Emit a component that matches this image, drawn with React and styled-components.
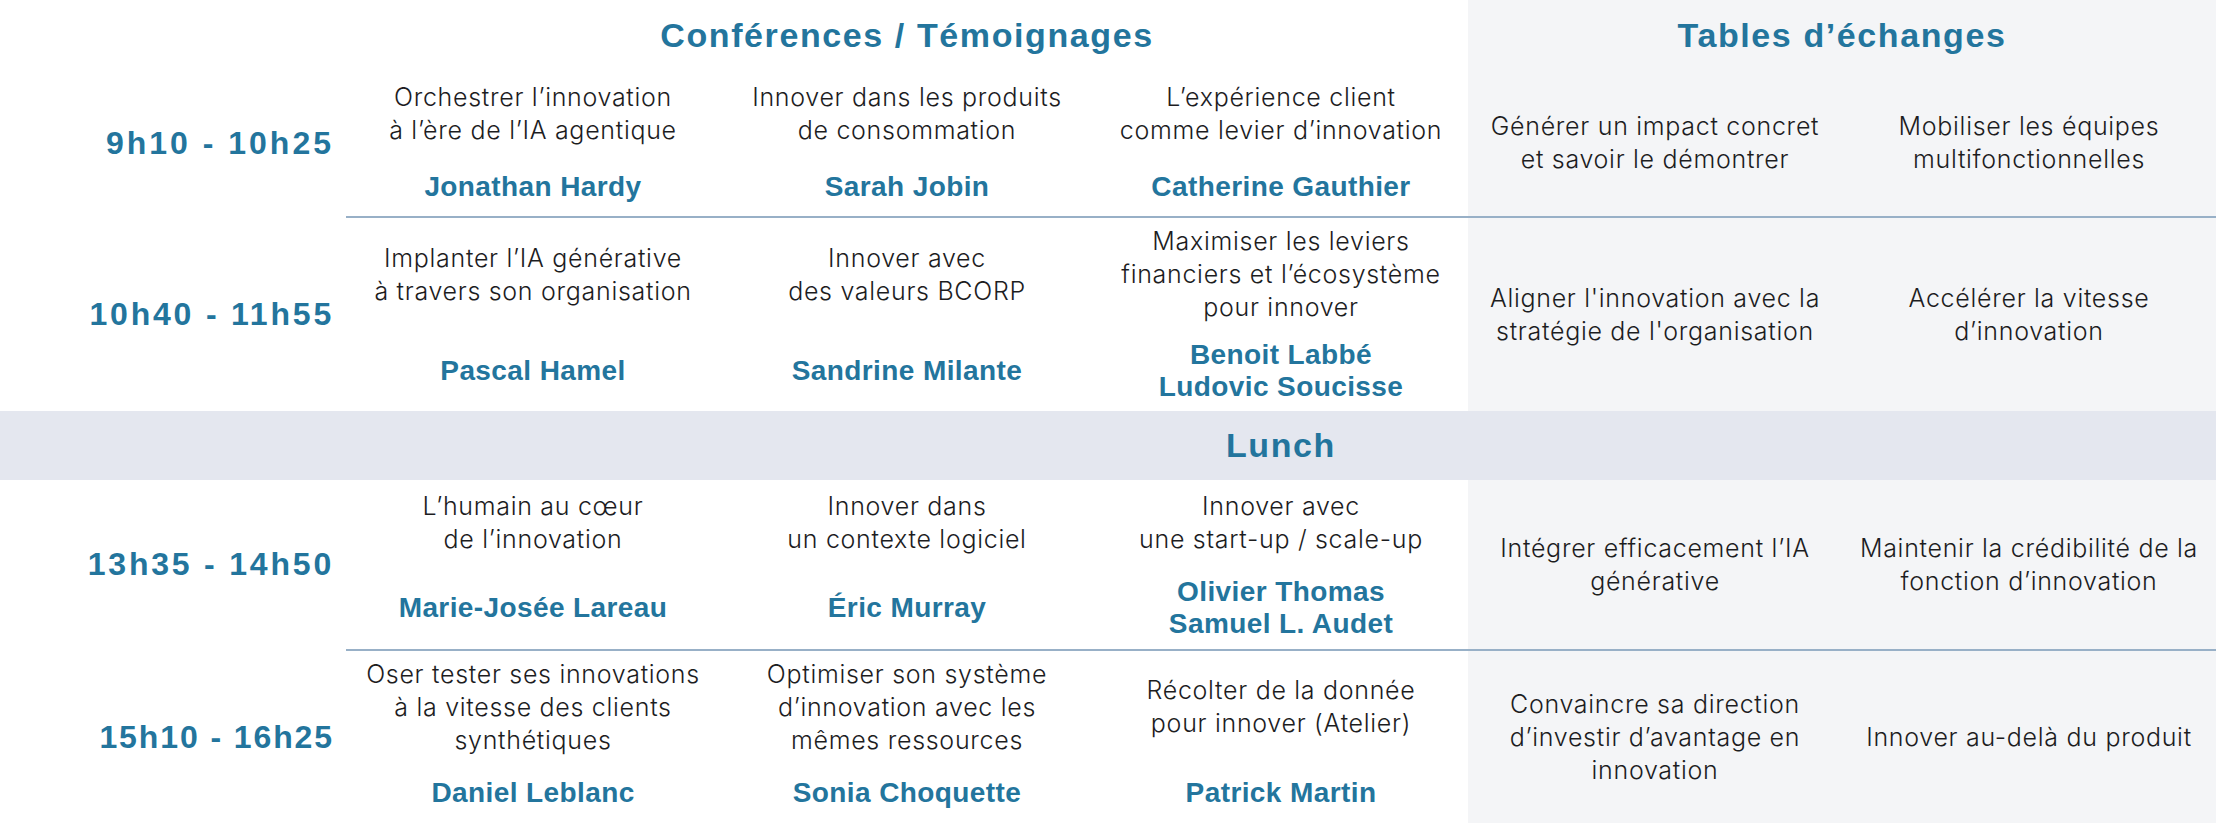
import React from "react";
import styled, { createGlobalStyle } from "styled-components";

const BLUE = "#23759d";
const PANEL = "#f4f5f7";
const BAND = "#e4e7ef";
const RULE = "#98b0c7";
const COLS = "346px repeat(5, 374px)";

const GlobalStyle = createGlobalStyle`
  html, body { margin: 0; padding: 0; background: #ffffff; }
  body { font-family: "Liberation Sans", Arial, sans-serif; }
`;

const Schedule = styled.div`
  width: 2216px;
  display: flex;
  flex-direction: column;
`;

const HeaderRow = styled.div`
  display: grid;
  grid-template-columns: ${COLS};
  height: 70px;
`;

const SectionTitle = styled.h2`
  margin: 0;
  grid-column: ${(p) => p.$cols};
  display: flex;
  align-items: center;
  justify-content: center;
  background: ${(p) => (p.$tinted ? PANEL : "transparent")};
  color: ${BLUE};
  font-family: "Liberation Sans", Arial, sans-serif;
  font-weight: 700;
  font-size: 34px;
  letter-spacing: 1.6px;
`;

const Slot = styled.div`
  display: grid;
  grid-template-columns: ${COLS};
  grid-template-rows: ${(p) => `${p.$titleH}px ${p.$nameH}px`};
`;

const TimeCell = styled.div`
  grid-column: 1;
  grid-row: 1 / 3;
  display: flex;
  align-items: center;
  justify-content: flex-end;
  padding-right: 12px;
  color: ${BLUE};
  font-family: "Liberation Sans", Arial, sans-serif;
  font-weight: 700;
  font-size: 32px;
  letter-spacing: ${(p) => p.$spacing}px;
  white-space: nowrap;
`;

const TalkTitle = styled.div`
  grid-column: ${(p) => p.$col};
  grid-row: 1;
  display: flex;
  flex-direction: column;
  align-items: center;
  justify-content: center;
  text-align: center;
  color: #1d1d1f;
  font-family: Inter, "Liberation Sans", sans-serif;
  font-weight: 300;
  font-size: 25px;
  letter-spacing: 0.7px;
  line-height: 33px;
  white-space: nowrap;
`;

const Speakers = styled.div`
  grid-column: ${(p) => p.$col};
  grid-row: 2;
  display: flex;
  flex-direction: column;
  align-items: center;
  justify-content: center;
  text-align: center;
  color: ${BLUE};
  font-family: "Liberation Sans", Arial, sans-serif;
  font-weight: 700;
  font-size: 28px;
  letter-spacing: 0.4px;
  line-height: 32px;
  white-space: nowrap;
`;

const TableTopic = styled.div`
  grid-column: ${(p) => p.$col};
  grid-row: 1 / 3;
  display: flex;
  flex-direction: column;
  align-items: center;
  justify-content: center;
  text-align: center;
  background: ${PANEL};
  color: #1d1d1f;
  font-family: Inter, "Liberation Sans", sans-serif;
  font-weight: 300;
  font-size: 25px;
  letter-spacing: 0.7px;
  line-height: 33px;
  white-space: nowrap;
`;

const Divider = styled.div`
  height: 2px;
  display: grid;
  grid-template-columns: ${COLS};
  &::after {
    content: "";
    grid-column: 2 / 7;
    background: ${RULE};
  }
`;

const LunchBand = styled.div`
  display: grid;
  grid-template-columns: ${COLS};
  height: 69px;
  background: ${BAND};
`;

const LunchLabel = styled.div`
  grid-column: 2 / 7;
  display: flex;
  align-items: center;
  justify-content: center;
  color: ${BLUE};
  font-weight: 700;
  font-size: 34px;
  letter-spacing: 1.6px;
`;

const slots = [
  {
    time: "9h10 - 10h25",
    spacing: 3,
    titleH: 88,
    nameH: 58,
    talks: [
      { title: ["Orchestrer l’innovation", "à l’ère de l’IA agentique"], speakers: ["Jonathan Hardy"] },
      { title: ["Innover dans les produits", "de consommation"], speakers: ["Sarah Jobin"] },
      { title: ["L’expérience client", "comme levier d’innovation"], speakers: ["Catherine Gauthier"] },
    ],
    tables: [
      ["Générer un impact concret", "et savoir le démontrer"],
      ["Mobiliser les équipes", "multifonctionnelles"],
    ],
  },
  {
    time: "10h40 - 11h55",
    spacing: 2.8,
    titleH: 113,
    nameH: 80,
    talks: [
      { title: ["Implanter l’IA générative", "à travers son organisation"], speakers: ["Pascal Hamel"] },
      { title: ["Innover avec", "des valeurs BCORP"], speakers: ["Sandrine Milante"] },
      {
        title: ["Maximiser les leviers", "financiers et l’écosystème", "pour innover"],
        speakers: ["Benoit Labbé", "Ludovic Soucisse"],
      },
    ],
    tables: [
      ["Aligner l'innovation avec la", "stratégie de l'organisation"],
      ["Accélérer la vitesse", "d’innovation"],
    ],
    lunchAfter: true,
  },
  {
    time: "13h35 - 14h50",
    spacing: 2.8,
    titleH: 86,
    nameH: 83,
    talks: [
      { title: ["L’humain au cœur", "de l’innovation"], speakers: ["Marie-Josée Lareau"] },
      { title: ["Innover dans", "un contexte logiciel"], speakers: ["Éric Murray"] },
      { title: ["Innover avec", "une start-up / scale-up"], speakers: ["Olivier Thomas", "Samuel L. Audet"] },
    ],
    tables: [
      ["Intégrer efficacement l’IA", "générative"],
      ["Maintenir la crédibilité de la", "fonction d’innovation"],
    ],
  },
  {
    time: "15h10 - 16h25",
    spacing: 1.9,
    titleH: 112,
    nameH: 60,
    talks: [
      {
        title: ["Oser tester ses innovations", "à la vitesse des clients", "synthétiques"],
        speakers: ["Daniel Leblanc"],
      },
      {
        title: ["Optimiser son système", "d’innovation avec les", "mêmes ressources"],
        speakers: ["Sonia Choquette"],
      },
      { title: ["Récolter de la donnée", "pour innover (Atelier)"], speakers: ["Patrick Martin"] },
    ],
    tables: [
      ["Convaincre sa direction", "d’investir d’avantage en", "innovation"],
      ["Innover au-delà du produit"],
    ],
  },
];

const Lines = ({ lines }) => lines.map((l, i) => <span key={i}>{l}</span>);

export default function App() {
  return (
    <>
      <GlobalStyle />
      <Schedule>
        <HeaderRow>
          <SectionTitle $cols="2 / 5">Conférences / Témoignages</SectionTitle>
          <SectionTitle $cols="5 / 7" $tinted>
            Tables d’échanges
          </SectionTitle>
        </HeaderRow>
        {slots.map((s, si) => (
          <React.Fragment key={s.time}>
            <Slot $titleH={s.titleH} $nameH={s.nameH}>
              <TimeCell $spacing={s.spacing}>{s.time}</TimeCell>
              {s.talks.map((t, i) => (
                <React.Fragment key={i}>
                  <TalkTitle $col={i + 2}>
                    <Lines lines={t.title} />
                  </TalkTitle>
                  <Speakers $col={i + 2}>
                    <Lines lines={t.speakers} />
                  </Speakers>
                </React.Fragment>
              ))}
              {s.tables.map((t, i) => (
                <TableTopic key={i} $col={i + 5}>
                  <Lines lines={t} />
                </TableTopic>
              ))}
            </Slot>
            {s.lunchAfter ? (
              <LunchBand>
                <LunchLabel>Lunch</LunchLabel>
              </LunchBand>
            ) : si < slots.length - 1 ? (
              <Divider />
            ) : null}
          </React.Fragment>
        ))}
      </Schedule>
    </>
  );
}
